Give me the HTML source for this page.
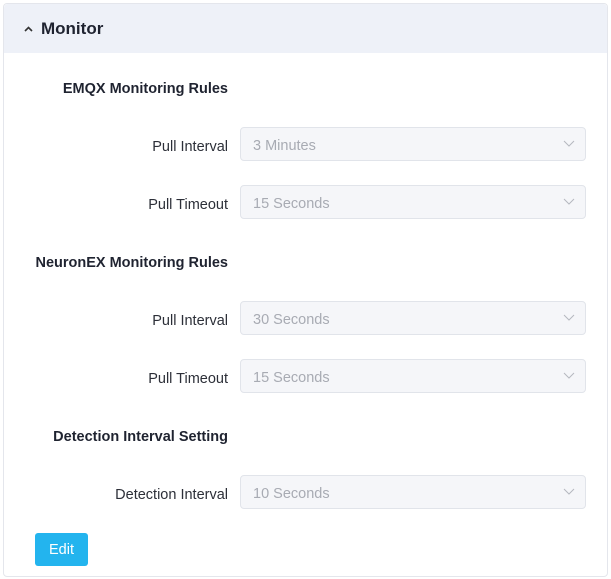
<!DOCTYPE html>
<html><head><style>
body{margin:0;background:#fff;font-family:"Liberation Sans",sans-serif;}
.card{position:absolute;left:3px;top:3px;width:603px;height:572px;border:1px solid #e4e6ec;border-radius:4px;background:#fff;}
.hd{position:absolute;left:0;top:0;right:0;height:49px;background:#eef1f8;border-radius:4px 4px 0 0;}
.hd span{position:absolute;left:37px;top:15px;font-size:17px;font-weight:bold;color:#1f2330;}
.hd svg{position:absolute;left:19px;top:21px;}
.t{position:absolute;right:379px;font-size:14.5px;font-weight:bold;color:#1f2330;white-space:nowrap;}
.l{position:absolute;right:379px;font-size:14.5px;color:#2c2f38;white-space:nowrap;}
.s{position:absolute;left:236px;width:344px;height:32px;border:1px solid #e1e4ea;background:#f5f6f9;border-radius:4px;}
.s span{position:absolute;left:12px;top:10px;font-size:14.5px;color:#a8abb3;}
.s svg{position:absolute;right:10px;top:12px;}
.btn{position:absolute;left:31px;top:529px;width:53px;height:33px;background:#23b4ee;border-radius:3px;color:#fff;font-size:14.5px;text-align:center;line-height:35px;}
</style></head><body>
<div class="card">
<div class="hd"><svg width="11" height="8" viewBox="0 0 11 8"><path d="M2 6L5.5 2.5L9 6" stroke="#333" stroke-width="1.6" fill="none"/></svg><span>Monitor</span></div>
<div class="t" style="top:77px">EMQX Monitoring Rules</div>
<div class="l" style="top:135px">Pull Interval</div>
<div class="s" style="top:123px"><span>3 Minutes</span><svg width="12" height="7"><path d="M1 1L6 6L11 1" stroke="#b5b8bf" fill="none"/></svg></div>
<div class="l" style="top:193px">Pull Timeout</div>
<div class="s" style="top:181px"><span>15 Seconds</span><svg width="12" height="7"><path d="M1 1L6 6L11 1" stroke="#b5b8bf" fill="none"/></svg></div>
<div class="t" style="top:251px">NeuronEX Monitoring Rules</div>
<div class="l" style="top:309px">Pull Interval</div>
<div class="s" style="top:297px"><span>30 Seconds</span><svg width="12" height="7"><path d="M1 1L6 6L11 1" stroke="#b5b8bf" fill="none"/></svg></div>
<div class="l" style="top:367px">Pull Timeout</div>
<div class="s" style="top:355px"><span>15 Seconds</span><svg width="12" height="7"><path d="M1 1L6 6L11 1" stroke="#b5b8bf" fill="none"/></svg></div>
<div class="t" style="top:425px">Detection Interval Setting</div>
<div class="l" style="top:483px">Detection Interval</div>
<div class="s" style="top:471px"><span>10 Seconds</span><svg width="12" height="7"><path d="M1 1L6 6L11 1" stroke="#b5b8bf" fill="none"/></svg></div>
<div class="btn">Edit</div>
</div>
</body></html>
